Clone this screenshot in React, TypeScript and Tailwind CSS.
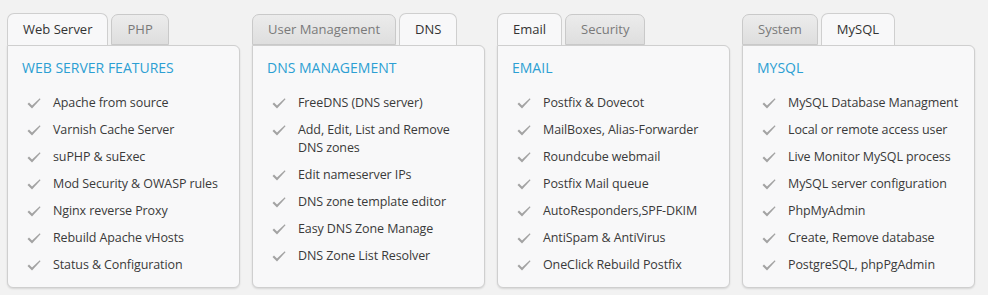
import React from 'react';

type Panel = {
  tabs: string[];
  active: number;
  title: string;
  items: string[];
};

const panels: Panel[] = [
  {
    tabs: ['Web Server', 'PHP'],
    active: 0,
    title: 'WEB SERVER FEATURES',
    items: [
      'Apache from source',
      'Varnish Cache Server',
      'suPHP & suExec',
      'Mod Security & OWASP rules',
      'Nginx reverse Proxy',
      'Rebuild Apache vHosts',
      'Status & Configuration',
    ],
  },
  {
    tabs: ['User Management', 'DNS'],
    active: 1,
    title: 'DNS MANAGEMENT',
    items: [
      'FreeDNS (DNS server)',
      'Add, Edit, List and Remove DNS zones',
      'Edit nameserver IPs',
      'DNS zone template editor',
      'Easy DNS Zone Manage',
      'DNS Zone List Resolver',
    ],
  },
  {
    tabs: ['Email', 'Security'],
    active: 0,
    title: 'EMAIL',
    items: [
      'Postfix & Dovecot',
      'MailBoxes, Alias-Forwarder',
      'Roundcube webmail',
      'Postfix Mail queue',
      'AutoResponders,SPF-DKIM',
      'AntiSpam & AntiVirus',
      'OneClick Rebuild Postfix',
    ],
  },
  {
    tabs: ['System', 'MySQL'],
    active: 1,
    title: 'MYSQL',
    items: [
      'MySQL Database Managment',
      'Local or remote access user',
      'Live Monitor MySQL process',
      'MySQL server configuration',
      'PhpMyAdmin',
      'Create, Remove database',
      'PostgreSQL, phpPgAdmin',
    ],
  },
];

const Check = () => (
  <svg width="14" height="11" viewBox="0 0 14 11" className="shrink-0 mt-[4px]">
    <path d="M0.5 6 L2 4.6 L5 7.4 L12.8 0.3 L13.5 1.2 L5 10.5 Z" fill="#a3a3a3" />
  </svg>
);

const FeaturePanel = ({ panel }: { panel: Panel }) => (
  <div className="flex flex-col w-[233px]">
    <div className="flex gap-[3px] relative z-10">
      {panel.tabs.map((tab, i) =>
        i === panel.active ? (
          <div
            key={tab}
            className="h-[32px] px-[15px] flex items-center text-[13px] text-[#333] bg-[#f8f8f9] border border-[#cfcfcf] border-b-0 rounded-t-[7px] -mb-px"
          >
            {tab}
          </div>
        ) : (
          <div
            key={tab}
            className="h-[31px] mt-[1px] px-[15px] flex items-center text-[13px] text-[#7a7a7a] bg-gradient-to-b from-[#ececec] to-[#dedede] border border-[#c9c9c9] rounded-t-[7px]"
          >
            {tab}
          </div>
        )
      )}
    </div>
    <div className="flex-1 bg-[#f8f8f9] border border-[#cfcfcf] rounded-b-[6px] rounded-tr-[6px] shadow-[0_1px_2px_rgba(0,0,0,0.12)] pl-[14px] pr-[12px] pt-[13px] pb-[9px]">
      <div className="text-[14px] leading-[18px] text-[#2c9fd3]">{panel.title}</div>
      <ul className="mt-[12px]">
        {panel.items.map((item) => (
          <li
            key={item}
            className="flex gap-[12px] pl-[5px] py-[4.5px] text-[12.5px] tracking-[-0.1px] leading-[18px] text-[#3a3a3a]"
          >
            <Check />
            <span>{item}</span>
          </li>
        ))}
      </ul>
    </div>
  </div>
);

export default function App() {
  return (
    <div
      className="w-[988px] h-[295px] bg-[#f2f2f2] pt-[13px] pl-[7px] flex gap-[12px] items-stretch pb-[7px]"
      style={{ fontFamily: '"Open Sans", "DejaVu Sans", sans-serif' }}
    >
      {panels.map((p) => (
        <FeaturePanel key={p.title} panel={p} />
      ))}
    </div>
  );
}
